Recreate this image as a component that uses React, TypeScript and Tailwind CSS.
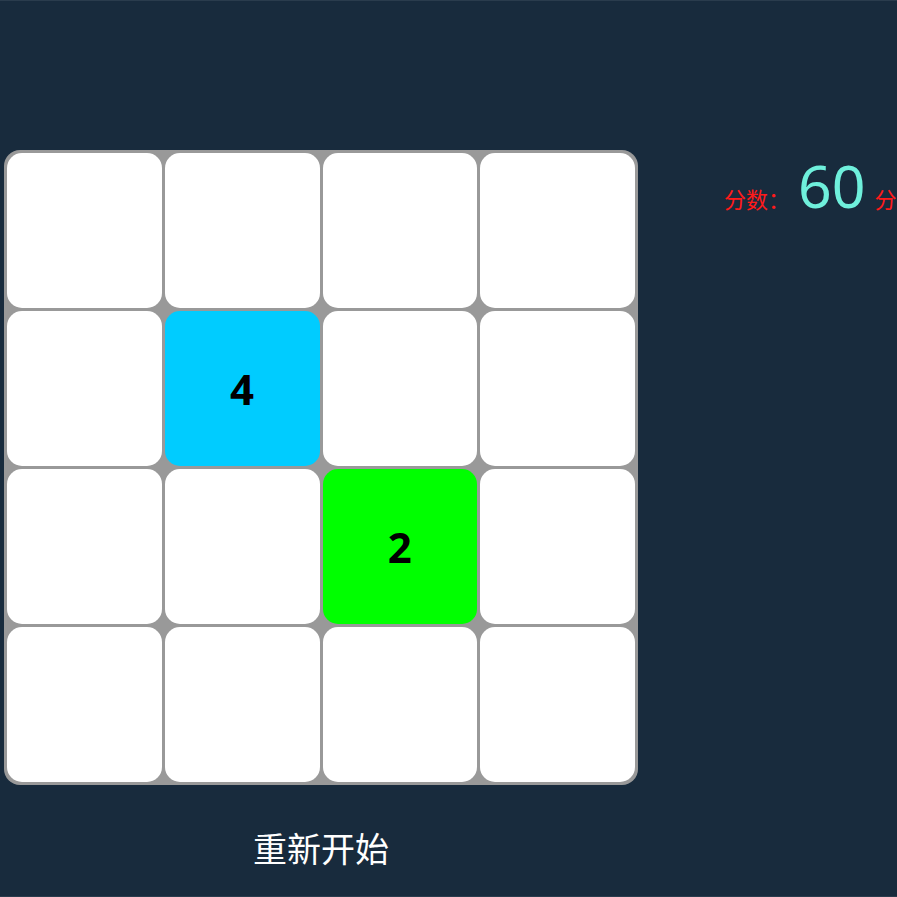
import React from "react";

const board = [
  [0, 0, 0, 0],
  [0, 4, 0, 0],
  [0, 0, 2, 0],
  [0, 0, 0, 0],
];

const tileColor: Record<number, string> = {
  0: "bg-white",
  2: "bg-[#00ff00]",
  4: "bg-[#00ccff]",
};

export default function App() {
  return (
    <div
      className="h-[897px] w-[897px] overflow-hidden border-y border-[#2a3c4d] bg-[#182b3d]"
      style={{ fontFamily: '"Noto Sans", "Noto Sans CJK SC", sans-serif' }}
    >
      <div className="flex pt-[149px]">
        <div className="ml-[4px] flex w-[634px] flex-col items-center">
          <div className="grid w-[634px] grid-cols-4 gap-[3px] rounded-[16px] bg-[#999999] p-[3px]">
            {board.flat().map((v, i) => (
              <div
                key={i}
                className={`flex h-[155px] items-center justify-center rounded-[15px] text-[42px] font-bold text-black ${tileColor[v]}`}
              >
                {v > 0 ? v : ""}
              </div>
            ))}
          </div>
          <button className="mt-[47px] text-[34px] leading-none text-white">重新开始</button>
        </div>
        <div className="ml-[86px] mt-[6px] flex items-baseline whitespace-nowrap">
          <span className="text-[22px] text-[#ff1a1a]">分数：</span>
          <span className="ml-[8px] text-[59px] leading-none text-[#6ff0dc]">60</span>
          <span className="ml-[9px] text-[22px] text-[#ff1a1a]">分</span>
        </div>
      </div>
    </div>
  );
}
